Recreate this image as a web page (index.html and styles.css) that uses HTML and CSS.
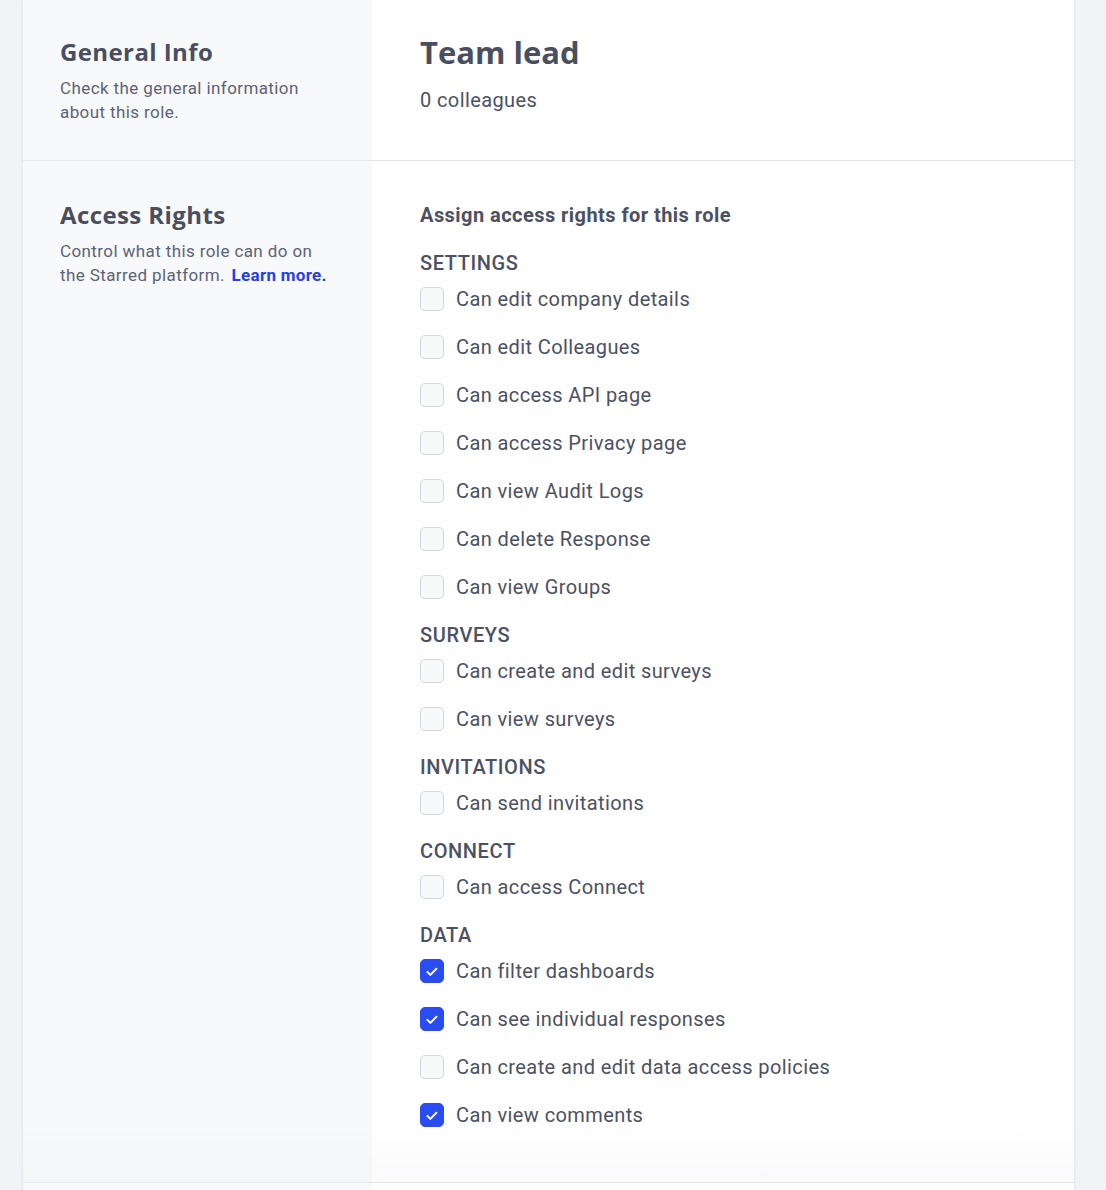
FILE: index.html
```html
<!DOCTYPE html>
<html>
<head>
<meta charset="utf-8">
<link rel="stylesheet" href="styles.css">
</head>
<body>
<div class="page">
  <div class="card">
    <section class="row row-info">
      <div class="side">
        <h2 class="side-title">General Info</h2>
        <p class="side-desc">Check the general information about this role.</p>
      </div>
      <div class="main">
        <h1 class="role-name">Team lead</h1>
        <p class="role-count">0 colleagues</p>
      </div>
    </section>
    <section class="row row-rights">
      <div class="side">
        <h2 class="side-title">Access Rights</h2>
        <p class="side-desc">Control what this role can do on the Starred platform. <a class="link" href="#">Learn more.</a></p>
      </div>
      <div class="main main-rights">
        <h3 class="assign">Assign access rights for this role</h3>

        <div class="group">
          <h4 class="group-title">Settings</h4>
          <label class="check"><span class="box"></span><span class="label">Can edit company details</span></label>
          <label class="check"><span class="box"></span><span class="label">Can edit Colleagues</span></label>
          <label class="check"><span class="box"></span><span class="label">Can access API page</span></label>
          <label class="check"><span class="box"></span><span class="label">Can access Privacy page</span></label>
          <label class="check"><span class="box"></span><span class="label">Can view Audit Logs</span></label>
          <label class="check"><span class="box"></span><span class="label">Can delete Response</span></label>
          <label class="check"><span class="box"></span><span class="label">Can view Groups</span></label>
        </div>

        <div class="group">
          <h4 class="group-title">Surveys</h4>
          <label class="check"><span class="box"></span><span class="label">Can create and edit surveys</span></label>
          <label class="check"><span class="box"></span><span class="label">Can view surveys</span></label>
        </div>

        <div class="group">
          <h4 class="group-title">Invitations</h4>
          <label class="check"><span class="box"></span><span class="label">Can send invitations</span></label>
        </div>

        <div class="group">
          <h4 class="group-title">Connect</h4>
          <label class="check"><span class="box"></span><span class="label">Can access Connect</span></label>
        </div>

        <div class="group">
          <h4 class="group-title">Data</h4>
          <label class="check"><span class="box checked"><svg viewBox="0 0 24 24" width="24" height="24"><path d="M7.4 12.9l3 3 6-6.2" fill="none" stroke="#fff" stroke-width="2" stroke-linecap="round" stroke-linejoin="round"/></svg></span><span class="label">Can filter dashboards</span></label>
          <label class="check"><span class="box checked"><svg viewBox="0 0 24 24" width="24" height="24"><path d="M7.4 12.9l3 3 6-6.2" fill="none" stroke="#fff" stroke-width="2" stroke-linecap="round" stroke-linejoin="round"/></svg></span><span class="label">Can see individual responses</span></label>
          <label class="check"><span class="box"></span><span class="label">Can create and edit data access policies</span></label>
          <label class="check"><span class="box checked"><svg viewBox="0 0 24 24" width="24" height="24"><path d="M7.4 12.9l3 3 6-6.2" fill="none" stroke="#fff" stroke-width="2" stroke-linecap="round" stroke-linejoin="round"/></svg></span><span class="label">Can view comments</span></label>
        </div>
      </div>
    </section>
    <section class="row row-next">
      <div class="side"></div>
      <div class="main"></div>
    </section>
  </div>
</div>
</body>
</html>
```

FILE: styles.css
```css
* { box-sizing: border-box; }
html, body { margin: 0; padding: 0; }
body {
  background: #f2f3f7;
  font-family: Roboto, "Liberation Sans", sans-serif;
  color: #4b5163;
  height: 1190px;
  overflow: hidden;
}
.page {
  padding-left: 23px;
  width: 1074px;
}
.card {
  background: #fff;
  box-shadow: 0 0 3px rgba(40, 45, 70, 0.12);
}
.row {
  display: flex;
  border-bottom: 1px solid #e4e5ef;
}
.side {
  width: 349px;
  flex: none;
  background: #f8f9fb;
  padding: 36px 38px 36px 37px;
}
.main {
  flex: 1;
  padding: 36px 48px 36px 48px;
}
.side-title {
  margin: 0;
  font-family: "Open Sans", sans-serif;
  font-weight: 700;
  font-size: 24px;
  line-height: 32px;
  color: #4a4f5f;
  letter-spacing: 0.4px;
}
.side-desc {
  margin: 8px 0 0;
  font-size: 17px;
  line-height: 24px;
  color: #5c6377;
  letter-spacing: 0.4px;
}
.link {
  color: #2440e6;
  font-weight: 700;
  text-decoration: none;
  letter-spacing: 0.3px;
  margin-left: 2px;
}
.role-name {
  margin: 0;
  font-family: "Open Sans", sans-serif;
  font-weight: 700;
  font-size: 31px;
  line-height: 32px;
  color: #4a4f5f;
}
.role-count {
  margin: 18px 0 0;
  font-size: 20px;
  line-height: 28px;
  color: #4b5163;
  letter-spacing: 0.4px;
}
.row-info .main { padding-bottom: 46px; }
.row-rights .side {
  padding-top: 38px;
  background: linear-gradient(to bottom, #f8f9fb 0, #f8f9fb calc(100% - 60px), #f4f5f7 100%);
}
.main-rights {
  padding-top: 42px;
  padding-bottom: 55px;
  background: linear-gradient(to bottom, #fff 0, #fff calc(100% - 60px), #fafafb 100%);
}
.assign {
  margin: 0;
  font-size: 20px;
  line-height: 24px;
  font-weight: 700;
  color: #4b5163;
  letter-spacing: 0.45px;
}
.group { margin-top: 24px; }
.group-title {
  margin: 0 0 12px;
  font-size: 20px;
  line-height: 24px;
  font-weight: 500;
  text-transform: uppercase;
  color: #4b5163;
  letter-spacing: 0.6px;
}
.check {
  display: flex;
  align-items: center;
  height: 24px;
  margin-bottom: 24px;
  gap: 12px;
}
.group .check:last-child { margin-bottom: 0; }
.box {
  width: 24px;
  height: 24px;
  flex: none;
  border: 1px solid #d3d6df;
  border-radius: 5px;
  background: #f8f9fb;
  display: flex;
}
.box.checked {
  border-color: #2b4cf5;
  background: #2b4cf5;
}
.box svg { margin: -1px; }
.label {
  font-size: 20px;
  line-height: 24px;
  color: #4b5163;
  letter-spacing: 0.4px;
}
.row-next { border-bottom: none; height: 20px; }
.row-next .side { padding: 0; }
.row-next .main { padding: 0; }
```
